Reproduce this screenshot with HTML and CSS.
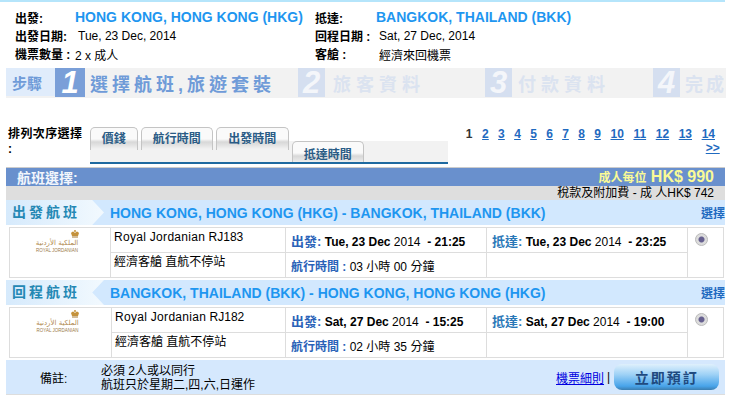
FILE: index.html
```html
<!DOCTYPE html>
<html lang="zh-Hant">
<head>
    <meta charset="UTF-8">
    <meta name="viewport" content="width=device-width, initial-scale=1.0">
    <title>航班選擇</title>
    <link rel="stylesheet" href="styles.css">
</head>
<body>
<div class="page">

    <!-- trip summary -->
    <div class="summary">
        <div class="summary-row">
            <b class="sum-label">出發:</b><span class="sum-city">HONG KONG, HONG KONG (HKG)</span>
            <b class="sum-label">抵達:</b><span class="sum-city">BANGKOK, THAILAND (BKK)</span>
        </div>
        <div class="summary-row">
            <b class="sum-label">出發日期:</b><span class="sum-value">Tue, 23 Dec, 2014</span>
            <b class="sum-label">回程日期 :</b><span class="sum-value">Sat, 27 Dec, 2014</span>
        </div>
        <div class="summary-row">
            <b class="sum-label">機票數量 :</b><span class="sum-value sum-count">2 x 成人</span>
            <b class="sum-label">客艙 :</b><span class="sum-value">經濟來回機票</span>
        </div>
    </div>

    <!-- booking steps -->
    <div class="steps">
        <div class="step-title">步驟</div>
        <div class="step-num step-on">1</div>
        <div class="step-text step-text-on">選擇航班,旅遊套裝</div>
        <div class="step-num">2</div>
        <div class="step-text step-text-2">旅客資料</div>
        <div class="step-num">3</div>
        <div class="step-text step-text-3">付款資料</div>
        <div class="step-num">4</div>
        <div class="step-text step-text-4">完成</div>
    </div>

    <!-- sorting -->
    <div class="sort">
        <b class="sort-label">排列次序選擇<br>:</b>
        <div class="tabs">
            <div class="tab tab-price">價錢</div>
            <div class="tab">航行時間</div>
            <div class="tab tab-depart">出發時間</div>
            <div class="tab tab-low">抵達時間</div>
        </div>
        <div class="pages">
            <b class="page-now">1</b>
            <a href="#">2</a><a href="#">3</a><a href="#">4</a><a href="#">5</a><a href="#">6</a><a href="#">7</a><a href="#">8</a><a href="#">9</a><a href="#" class="wide">10</a><a href="#" class="wide">11</a><a href="#" class="wide">12</a><a href="#" class="wide">13</a><a href="#" class="wide">14</a>
            <a href="#" class="next">&gt;&gt;</a>
        </div>
    </div>

    <!-- result -->
    <div class="result-head">
        <b>航班選擇:</b>
        <b class="price"><span class="price-label">成人每位</span> HK$ 990</b>
    </div>
    <div class="tax">稅款及附加費 - 成 人HK$ 742</div>

    <div class="route">
        <div class="route-tag route-out">出發航班</div>
        <div class="route-name">HONG KONG, HONG KONG (HKG) - BANGKOK, THAILAND (BKK)</div>
        <a href="#" class="route-pick">選擇</a>
    </div>
    <table class="flight">
        <tr>
            <td rowspan="2" class="logo-cell">
                <div class="logo">
                    <svg class="crown" width="10" height="8" viewBox="0 0 10 8"><path d="M1 3 Q3 0 5 3 Q7 0 9 3 L8 6 L2 6 Z" fill="#c4923c"/><circle cx="5" cy="1" r="1" fill="#c4923c"/><rect x="2" y="6.5" width="6" height="1" fill="#a87a30"/></svg>
                    <div class="logo-ar" dir="rtl" lang="ar">الملكية الأردنية</div>
                    <div class="logo-en">ROYAL JORDANIAN</div>
                </div>
            </td>
            <td class="info"><b class="airline">Royal Jordanian</b> RJ183</td>
            <td class="time"><b class="tl">出發:</b> <b>Tue, 23 Dec</b> 2014 &nbsp;<b>- 21:25</b></td>
            <td class="time"><b class="tl tl-arr">抵達:</b> <b>Tue, 23 Dec</b> 2014 &nbsp;<b>- 23:25</b></td>
            <td rowspan="2" class="pick"><span class="radio"></span></td>
        </tr>
        <tr>
            <td class="info">經濟客艙 直航不停站</td>
            <td class="time"><b class="tl tl-small">航行時間 :</b> 03 小時 00 分鐘</td>
            <td></td>
        </tr>
    </table>

    <div class="route">
        <div class="route-tag route-back">回程航班</div>
        <div class="route-name">BANGKOK, THAILAND (BKK) - HONG KONG, HONG KONG (HKG)</div>
        <a href="#" class="route-pick">選擇</a>
    </div>
    <table class="flight flight-back">
        <tr>
            <td rowspan="2" class="logo-cell">
                <div class="logo">
                    <svg class="crown" width="10" height="8" viewBox="0 0 10 8"><path d="M1 3 Q3 0 5 3 Q7 0 9 3 L8 6 L2 6 Z" fill="#c4923c"/><circle cx="5" cy="1" r="1" fill="#c4923c"/><rect x="2" y="6.5" width="6" height="1" fill="#a87a30"/></svg>
                    <div class="logo-ar" dir="rtl" lang="ar">الملكية الأردنية</div>
                    <div class="logo-en">ROYAL JORDANIAN</div>
                </div>
            </td>
            <td class="info"><b class="airline">Royal Jordanian</b> RJ182</td>
            <td class="time"><b class="tl">出發:</b> <b>Sat, 27 Dec</b> 2014 &nbsp;<b>- 15:25</b></td>
            <td class="time"><b class="tl tl-arr">抵達:</b> <b>Sat, 27 Dec</b> 2014 &nbsp;<b>- 19:00</b></td>
            <td rowspan="2" class="pick"><span class="radio"></span></td>
        </tr>
        <tr>
            <td class="info">經濟客艙 直航不停站</td>
            <td class="time"><b class="tl tl-small">航行時間 :</b> 02 小時 35 分鐘</td>
            <td></td>
        </tr>
    </table>

    <div class="foot">
        <div class="foot-label">備註:</div>
        <div class="foot-notes">必須 2人或以同行<br>航班只於星期二,四,六,日運作</div>
        <a href="#" class="foot-link">機票細則</a><span class="foot-sep">|</span>
        <button class="book" type="button">立即預訂</button>
    </div>

</div>
</body>
</html>
```

FILE: styles.css
```css
* {
    box-sizing: border-box;
}

body {
    margin: 0;
    font-family: "Liberation Sans", "Noto Sans CJK TC", sans-serif;
    font-size: 12px;
    color: #000;
    background: #fff;
}

.page {
    width: 725px;
    height: 405px;
    border-top: 2px solid #b5e5fb;
}

/* summary */
.summary {
    height: 66px;
    padding: 6px 0 0 15px;
}

.summary-row {
    display: grid;
    grid-template-columns: 60px 240px 61px 1fr;
    align-items: center;
    height: 18px;
}

.sum-label {
    white-space: nowrap;
}

.sum-city {
    color: #1e96f0;
    font-size: 14px;
    font-weight: bold;
    white-space: nowrap;
}

.sum-value {
    padding: 2px 0 0 3px;
    white-space: nowrap;
}

.sum-count {
    padding-left: 0;
}

/* steps */
.steps {
    display: flex;
    align-items: center;
    height: 30px;
    margin: 0 -1px 0 6px;
    background: #f2f2f2;
}

.steps > div {
    flex-shrink: 0;
}

.step-title {
    width: 49px;
    height: 28px;
    padding-left: 6px;
    align-self: flex-start;
    background: #e0ecfb;
    color: #6f9bd8;
    font-size: 15px;
    font-weight: bold;
    line-height: 32px;
}

.step-num {
    width: 27px;
    height: 29px;
    align-self: flex-start;
    background: #d5dff0;
    color: #f4f6fa;
    font-size: 31px;
    font-style: italic;
    font-weight: bold;
    line-height: 29px;
    text-align: center;
}

.step-on {
    width: 30px;
    background: #7a9fd8;
    color: #fff;
}

.step-text {
    padding-left: 5px;
    color: #dbe3f0;
    font-size: 18px;
    font-weight: bold;
    letter-spacing: 5px;
    white-space: nowrap;
}

.step-text-on {
    width: 213px;
    color: #6f9bd8;
    letter-spacing: 4px;
}

.step-text-2 {
    width: 160px;
    padding-left: 8px;
}

.step-text-3 {
    width: 141px;
    padding-left: 6px;
}

.step-text-4 {
    letter-spacing: 3px;
}

/* sort + tabs */
.sort {
    display: flex;
    height: 69px;
    padding: 29px 0 0 8px;
}

.sort-label {
    width: 82px;
    line-height: 15px;
    letter-spacing: 0.4px;
}

.tabs {
    display: flex;
    align-items: flex-start;
    gap: 3px;
    width: 359px;
    height: 37px;
    background: linear-gradient(#fff 14px, #f2f2f2 14px);
    border-bottom: 2px solid #1f6aa0;
}

.tab {
    width: 72px;
    height: 23px;
    padding-top: 1px;
    border: 1px solid #c4c4c4;
    border-bottom: 0;
    border-radius: 5px 5px 0 0;
    background: linear-gradient(#fafafa 11px, #d8d8d8 14px, #e6e6e6 18px, #f2f2f2 21px);
    color: #2a5c86;
    font-weight: bold;
    text-align: center;
}

.tab-price {
    width: 48px;
}

.tab-depart {
    width: 73px;
}

.tab-low {
    height: 21px;
    margin-top: 14px;
    padding-top: 3px;
}

.pages {
    width: 260px;
    margin-left: 18px;
    font-weight: bold;
    line-height: 14px;
    white-space: nowrap;
}

.pages a {
    display: inline-block;
    margin-left: 9.33px;
    color: #1f6ac0;
}

.page-now {
    color: #333;
    margin-right: -3px;
}

.pages .wide {
    margin-left: 9.6px;
}

.pages .next {
    display: block;
    width: 15px;
    margin-left: 240px;
}

/* result header */
.result-head {
    display: flex;
    justify-content: space-between;
    align-items: center;
    height: 19px;
    margin-left: 6px;
    padding: 0 11px;
    border-top: 1px solid #ccc;
    background: #6990cd;
    color: #f2f6fc;
    font-size: 14px;
}

.price {
    color: #fafa96;
    font-size: 16px;
    line-height: 18px;
}

.price-label {
    font-size: 12px;
}

.tax {
    height: 14px;
    margin-left: 6px;
    padding-right: 11px;
    background: #dedede;
    line-height: 14px;
    text-align: right;
}

/* route header */
.route {
    display: flex;
    align-items: center;
    height: 25px;
    margin-left: 6px;
    background: #d2e8fe;
}

.route-tag {
    width: 98px;
    height: 25px;
    padding-left: 6px;
    background: linear-gradient(to right, #d6eafc, #f2f9fe);
    color: #2488b4;
    font-size: 14px;
    font-weight: bold;
    letter-spacing: 3px;
    line-height: 25px;
}

.route-out {
    clip-path: polygon(0 0, 88% 0, 100% 50%, 88% 100%, 0 100%);
}

.route-back {
    clip-path: polygon(0 0, 100% 0, 88% 50%, 100% 100%, 0 100%);
}

.route-name {
    flex: 1;
    padding-left: 6px;
    color: #1e96f0;
    font-size: 14px;
    font-weight: bold;
    white-space: nowrap;
}

.route-pick {
    color: #1f6ac0;
    font-weight: bold;
    text-decoration: none;
}

/* flight table */
.flight {
    width: 714px;
    height: 51px;
    margin: 2px 0 2px 9px;
    border-collapse: collapse;
    table-layout: fixed;
}

.flight td {
    height: 25px;
    padding: 0 5px;
    border: 1px solid #ddd;
    white-space: nowrap;
}

.flight .logo-cell {
    width: 101px;
    padding-top: 2px;
    vertical-align: top;
}

.info {
    width: 175px;
    padding-left: 3px !important;
    vertical-align: top;
    line-height: 19px;
}

.flight-back .logo-cell {
    width: 102px;
}

.flight-back .info {
    width: 174px;
}

.airline {
    font-weight: normal;
    letter-spacing: 0.3px;
}

.time {
    width: 201px;
}

.tl {
    color: #2a62b8;
    font-size: 13px;
}

.tl-small {
    font-size: 12px;
}

.tl-arr {
    color: #2a78b8;
}

.pick {
    width: 36px;
    padding: 5px 0 0 7px !important;
    vertical-align: top;
}

.radio {
    display: block;
    width: 13px;
    height: 13px;
    border: 1px solid #bbb;
    border-radius: 50%;
    background: radial-gradient(circle, #66608f 0 2.5px, #dcdcdc 3.5px);
}

/* airline logo */
.logo {
    display: flex;
    flex-direction: column;
    align-items: center;
    margin-right: 6px;
    color: #b08a50;
}

.crown {
    margin-left: 35px;
}

.logo-ar {
    height: 10px;
    font-family: "DejaVu Sans", sans-serif;
    font-size: 7px;
    line-height: 10px;
}

.logo-en {
    font-size: 4.5px;
    line-height: 6px;
    color: #9a7a4a;
}

/* footer */
.foot {
    display: flex;
    align-items: center;
    height: 35px;
    margin-left: 6px;
    border-bottom: 1px solid #ddd;
    background: #d5e8fd;
}

.foot-label {
    width: 95px;
    padding-left: 34px;
}

.foot-notes {
    width: 455px;
    padding-top: 1px;
    line-height: 14px;
}

.foot-link {
    color: #0000e0;
}

.foot-sep {
    margin-left: 3px;
}

.book {
    width: 105px;
    height: 26px;
    margin-left: 4px;
    border: 0;
    border-radius: 8px;
    background: linear-gradient(#dff0fc 0, #9fd2f6 40%, #48a4ea 85%, #3b7eb0 100%);
    color: #1f4a80;
    font-family: "Liberation Sans", "Noto Sans CJK TC", sans-serif;
    font-size: 14px;
    font-weight: bold;
    letter-spacing: 2px;
}
```
